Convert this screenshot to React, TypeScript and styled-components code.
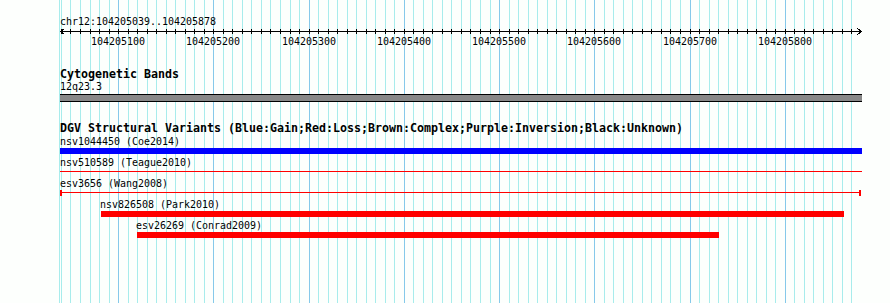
import styled, { createGlobalStyle } from "styled-components";

const WIN_START = 104205039;
const WIN_END = 104205878;
const PX_PER_BP = 800 / (WIN_END - WIN_START + 1);
const TRACK_WIDTH = 802;

type BarKind = "thick" | "thin" | "capped";

interface Feature {
  name: string;
  source: string;
  color: string;
  kind: BarKind;
  left: number; // track pixels
  right: number;
}

const features: Feature[] = [
  { name: "nsv1044450", source: "Coe2014", color: "#0000ff", kind: "thick", left: 0, right: 802 },
  { name: "nsv510589", source: "Teague2010", color: "#ff0000", kind: "thin", left: 0, right: 802 },
  { name: "esv3656", source: "Wang2008", color: "#ff0000", kind: "capped", left: 0, right: 801 },
  { name: "nsv826508", source: "Park2010", color: "#ff0000", kind: "thick", left: 41, right: 784 },
  { name: "esv26269", source: "Conrad2009", color: "#ff0000", kind: "thick", left: 77, right: 659 },
];

const toX = (bp: number): number => Math.round((bp - WIN_START) * PX_PER_BP);

const gridBases: number[] = [];
for (let bp = 104205040; bp <= WIN_END; bp += 10) gridBases.push(bp);
const majorBases = gridBases.filter((bp) => bp % 100 === 0);

const GlobalStyle = createGlobalStyle`
  html, body {
    margin: 0;
    padding: 0;
    background: #fdfffd;
  }
  body {
    font-family: "DejaVu Sans Mono", "Liberation Mono", monospace;
    color: #000;
  }
`;

const Page = styled.div`
  display: flex;
  width: 890px;
  height: 303px;
  overflow: hidden;
`;

const Gutter = styled.div`
  flex: none;
  width: 60px;
`;

const Tracks = styled.div`
  position: relative;
  flex: none;
  width: 803px;
  height: 303px;
`;

const GridLayer = styled.svg`
  position: absolute;
  top: 0;
  left: -1px;
  width: 804px;
  height: 303px;
  z-index: 0;
`;

const Content = styled.div`
  position: relative;
  z-index: 1;
  display: flex;
  flex-direction: column;
`;

const Text = styled.div`
  font-size: 9.97px;
  line-height: 10px;
  height: 11px;
  white-space: nowrap;
`;

const RulerTitle = styled(Text)`
  padding-top: 17px;
`;

const Axis = styled.svg`
  display: block;
  width: 803px;
  height: 9px;
`;

const TickLabels = styled.div`
  position: relative;
  height: 11px;
`;

const TickLabel = styled.span`
  position: absolute;
  top: 0;
  width: 60px;
  text-align: center;
  font-size: 9.97px;
  line-height: 10px;
`;

const TrackTitle = styled.div`
  margin-top: 22px;
  font-size: 11.63px;
  font-weight: bold;
  line-height: 8px;
  height: 12px;
  white-space: nowrap;
`;

const Band = styled.div`
  margin-top: 1px;
  width: ${TRACK_WIDTH}px;
  height: 6px;
  background: #888888;
  border-top: 1px solid #000;
  border-bottom: 1px solid #000;
`;

const FeatureList = styled.div`
  margin-top: 1px;
  display: flex;
  flex-direction: column;
`;

const FeatureRow = styled.div`
  height: 21px;
  display: flex;
  flex-direction: column;
`;

const BarLane = styled.div`
  height: 10px;
`;

const Bar = styled.div<{ $kind: BarKind; $color: string }>`
  box-sizing: border-box;
  height: 6px;
  background: ${({ $kind, $color }) =>
    $kind === "thick"
      ? $color
      : `linear-gradient(to bottom, transparent 2px, ${$color} 2px, ${$color} 3px, transparent 3px)`};
  border-left: ${({ $kind, $color }) => ($kind === "capped" ? `2px solid ${$color}` : "none")};
  border-right: ${({ $kind, $color }) => ($kind === "capped" ? `2px solid ${$color}` : "none")};
`;

const App = () => {
  return (
    <>
      <GlobalStyle />
      <Page>
        <Gutter />
        <Tracks>
          <GridLayer viewBox="0 0 804 303" shapeRendering="crispEdges">
            <rect x={0} y={0} width={1} height={303} fill="#a8ecec" />
            {gridBases.map((bp) => (
              <rect
                key={bp}
                x={toX(bp) + 1}
                y={0}
                width={1}
                height={303}
                fill={bp % 100 === 0 ? "#86c9ea" : "#a8ecec"}
              />
            ))}
          </GridLayer>
          <Content>
            <RulerTitle>
              chr12:{WIN_START}..{WIN_END}
            </RulerTitle>
            <Axis viewBox="0 0 803 9" shapeRendering="crispEdges">
              <rect x={0} y={3} width={802} height={1} fill="#000" />
              {gridBases.map((bp) => (
                <rect key={bp} x={toX(bp)} y={1} width={1} height={5} fill="#000" />
              ))}
              <polyline points="4.5,0.5 0.5,3.5 4.5,6.5" fill="none" stroke="#000" strokeWidth={1} />
              <polyline points="797.5,0.5 801.5,3.5 797.5,6.5" fill="none" stroke="#000" strokeWidth={1} />
            </Axis>
            <TickLabels>
              {majorBases.map((bp) => (
                <TickLabel key={bp} style={{ left: toX(bp) - 30 }}>
                  {bp}
                </TickLabel>
              ))}
            </TickLabels>

            <TrackTitle>Cytogenetic Bands</TrackTitle>
            <Text>12q23.3</Text>
            <Band />

            <TrackTitle>
              DGV Structural Variants (Blue:Gain;Red:Loss;Brown:Complex;Purple:Inversion;Black:Unknown)
            </TrackTitle>
            <FeatureList>
              {features.map((f) => (
                <FeatureRow key={f.name}>
                  <Text style={{ marginLeft: Math.max(0, f.left - 1) }}>
                    {f.name} ({f.source})
                  </Text>
                  <BarLane>
                    <Bar $kind={f.kind} $color={f.color} style={{ marginLeft: f.left, width: f.right - f.left }} />
                  </BarLane>
                </FeatureRow>
              ))}
            </FeatureList>
          </Content>
        </Tracks>
      </Page>
    </>
  );
};

export default App;
